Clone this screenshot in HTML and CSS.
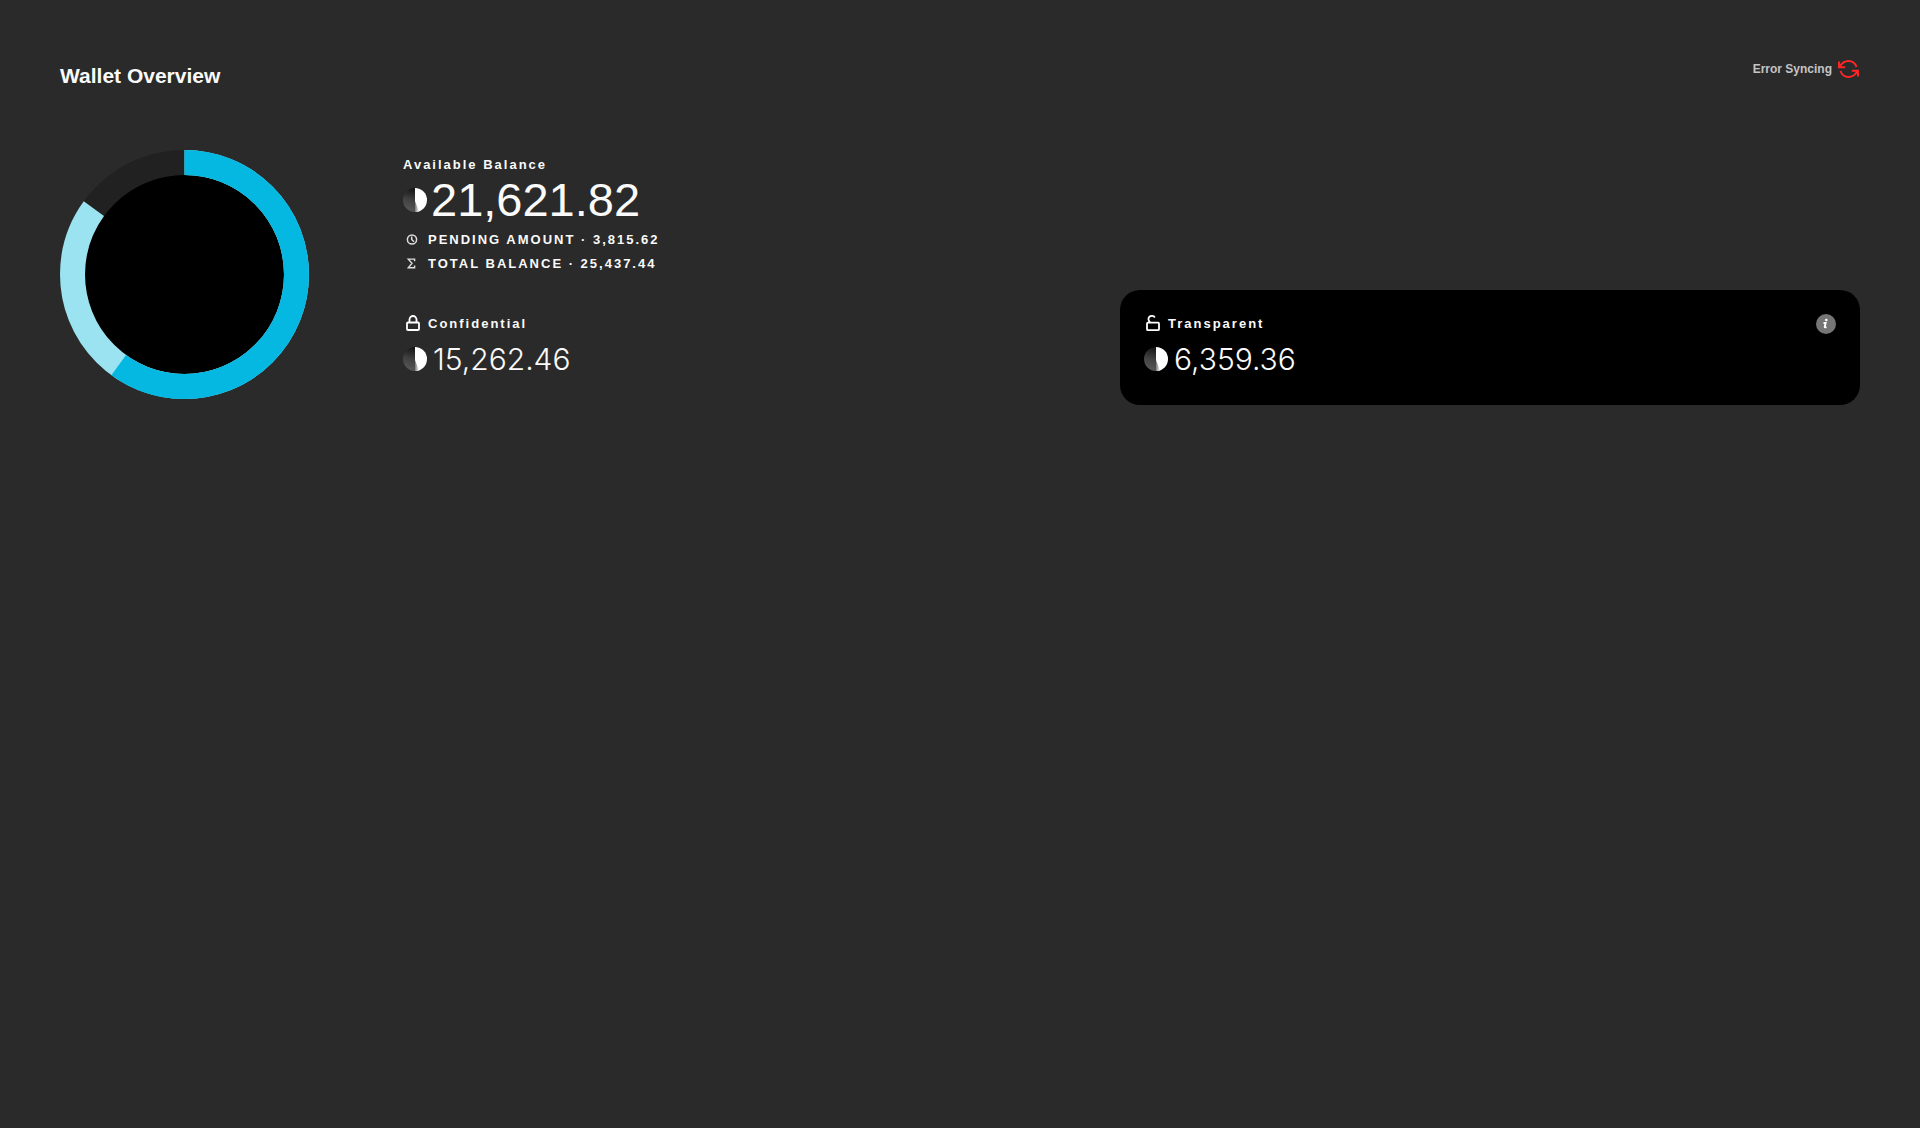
FILE: index.html
```html
<!DOCTYPE html>
<html lang="en">
<head>
<meta charset="utf-8">
<title>Wallet Overview</title>
<link rel="stylesheet" href="styles.css">
</head>
<body>
<svg class="defs" aria-hidden="true">
  <defs>
    <linearGradient id="coin-dark" x1="0.2" y1="1" x2="0.5" y2="0">
      <stop offset="0" stop-color="#5a5a5a"/>
      <stop offset="0.5" stop-color="#404040"/>
      <stop offset="1" stop-color="#101010"/>
    </linearGradient>
    <linearGradient id="coin-edge" x1="0" y1="0" x2="1" y2="0">
      <stop offset="0" stop-color="#777"/>
      <stop offset="1" stop-color="#fff"/>
    </linearGradient>
    <symbol id="coin" viewBox="0 0 24 24">
      <circle cx="12" cy="12" r="12" fill="url(#coin-dark)"/>
      <path d="M12 0a12 12 0 0 1 0 24z" fill="#fff"/>
      <path d="M12 13l4 10.300A12 12 0 0 1 12 24z" fill="url(#coin-edge)"/>
    </symbol>
  </defs>
</svg>
<main class="page">
  <header class="header">
    <h1 class="title">Wallet Overview</h1>
    <div class="sync">
      <span>Error Syncing</span>
      <svg class="sync-icon" viewBox="0 0 22 18" fill="none" stroke="#ff2626" stroke-width="1.900">
        <path d="M1 1.500v5.700h6.200M1.500 7C4 2.500 7.200 1 10.500 1c3.800 0 6.800 2.300 8 6"/>
        <path d="M20 16.500v-5.700h-6.200M19.500 11C17 15.500 13.800 17 10.500 17c-3.800 0-6.800-2.300-8-6"/>
      </svg>
    </div>
  </header>
  <section class="overview">
    <svg class="chart" viewBox="0 0 249 249" role="img" aria-label="Balance distribution">
      <circle cx="124.500" cy="124.500" r="100" fill="#000"/>
      <g fill="none" stroke-width="25" transform="rotate(-90 124.500 124.500)">
        <circle cx="124.500" cy="124.500" r="112" stroke="#212121"/>
        <circle cx="124.500" cy="124.500" r="112" stroke="#9be3f0" pathLength="100" stroke-dasharray="85 100"/>
        <circle cx="124.500" cy="124.500" r="112" stroke="#05b8e2" pathLength="100" stroke-dasharray="60 100"/>
      </g>
    </svg>
    <div class="balances">
      <div class="available">
        <h2 class="label">Available Balance</h2>
        <div class="amount amount-large"><svg class="coin"><use href="#coin"/></svg><span>21,621.82</span></div>
        <div class="detail">
          <svg class="detail-icon" viewBox="0 0 12 12" fill="none" stroke="#ddd" stroke-width="1.500"><circle cx="6" cy="5.500" r="4.600"/><path d="M5.700 2.500v3l2.300 2.300"/></svg>
          <span>PENDING AMOUNT · 3,815.62</span>
        </div>
        <div class="detail">
          <svg class="detail-icon" viewBox="0 0 12 12" fill="none" stroke="#ddd" stroke-width="1.400"><path d="M8.600 3.300V1.100H2.300L6 5.200 2.300 9.700h6.300V7.500"/></svg>
          <span>TOTAL BALANCE · 25,437.44</span>
        </div>
      </div>
      <div class="accounts">
        <div class="account">
          <h2 class="label account-label">
            <svg class="lock" viewBox="0 0 14 18" fill="none" stroke="#fff" stroke-width="1.800"><rect x="1" y="7.500" width="12" height="7.500" rx="1"/><path d="M3.500 7.500V4.500a3.500 3.500 0 0 1 7 0v3"/></svg>
            <span>Confidential</span>
          </h2>
          <div class="amount"><svg class="coin"><use href="#coin"/></svg><span>15,262.46</span></div>
        </div>
        <div class="account account-card">
          <h2 class="label account-label">
            <svg class="lock" viewBox="0 0 14 18" fill="none" stroke="#fff" stroke-width="1.800"><rect x="1" y="7.700" width="12" height="7.500" rx="1"/><path d="M4.300 7.700C2.300 5.700 1.800 3.200 3.500 1.700 5 .5 7.700.5 8.800 2.500"/></svg>
            <span>Transparent</span>
            <button class="info" type="button" aria-label="About transparent balance">
              <svg viewBox="0 0 20 20"><circle cx="10.300" cy="6" r="1.300" fill="#fff"/><path d="M7.500 9h2.200l-1 3.800q-.2 1.100 1.800.4" fill="none" stroke="#fff" stroke-width="1.800"/></svg>
            </button>
          </h2>
          <div class="amount"><svg class="coin"><use href="#coin"/></svg><span>6,359.36</span></div>
        </div>
      </div>
    </div>
  </section>
</main>
</body>
</html>
```
FILE: styles.css
```css
* {
  box-sizing: border-box;
}

body {
  margin: 0;
  min-height: 100vh;
  background: #2a2a2a;
  color: #fafafa;
  font-family: "Liberation Sans", Arial, sans-serif;
}

.defs {
  position: absolute;
  width: 0;
  height: 0;
}

.page {
  padding: 60px;
}

.header {
  display: flex;
  justify-content: space-between;
  align-items: flex-start;
  margin-bottom: 60px;
}

.title {
  margin: 0;
  padding-top: 2px;
  font-size: 21px;
  line-height: 28px;
}

.sync {
  display: flex;
  align-items: center;
  gap: 6px;
  color: #c4c4c4;
  font-size: 12px;
  font-weight: 700;
  line-height: 18px;
}

.sync-icon {
  width: 22px;
  height: 18px;
}

.overview {
  display: flex;
  align-items: flex-start;
  gap: 94px;
}

.chart {
  flex: none;
  width: 249px;
  height: 249px;
}

.balances {
  flex: 1;
}

.available {
  padding-top: 5px;
}

.label {
  margin: 0;
  font-size: 13px;
  line-height: 20px;
  letter-spacing: 2px;
}

.amount {
  display: flex;
  align-items: center;
  gap: 6px;
  margin-top: 4px;
  font-family: Inter, "Liberation Sans", sans-serif;
  font-size: 30px;
  font-weight: 300;
  line-height: 42px;
}

.amount-large {
  gap: 4px;
  margin: 0 0 3px;
  font-family: "Liberation Sans", Arial, sans-serif;
  font-size: 47px;
  font-weight: 400;
  line-height: 50px;
}

.coin {
  flex: none;
  width: 24px;
  height: 24px;
}

.detail {
  display: flex;
  align-items: center;
  gap: 10px;
  padding-left: 3px;
  font-size: 13px;
  font-weight: 700;
  line-height: 24px;
  letter-spacing: 2px;
}

.detail-icon {
  width: 12px;
  height: 12px;
}

.accounts {
  display: grid;
  grid-template-columns: 717fr 740fr;
  margin-top: 14px;
}

.account {
  padding: 24px 0 25px;
}

.account-card {
  padding: 24px 24px 25px;
  border-radius: 20px;
  background: #000;
}

.account-label {
  display: flex;
  align-items: center;
  gap: 8px;
  padding-left: 3px;
}

.account-card .account-label {
  padding-left: 2px;
}

.lock {
  width: 14px;
  height: 18px;
}

.info {
  width: 20px;
  height: 20px;
  margin-left: auto;
  padding: 0;
  border: 0;
  border-radius: 50%;
  background: #757575;
}

.info svg {
  display: block;
}
```
